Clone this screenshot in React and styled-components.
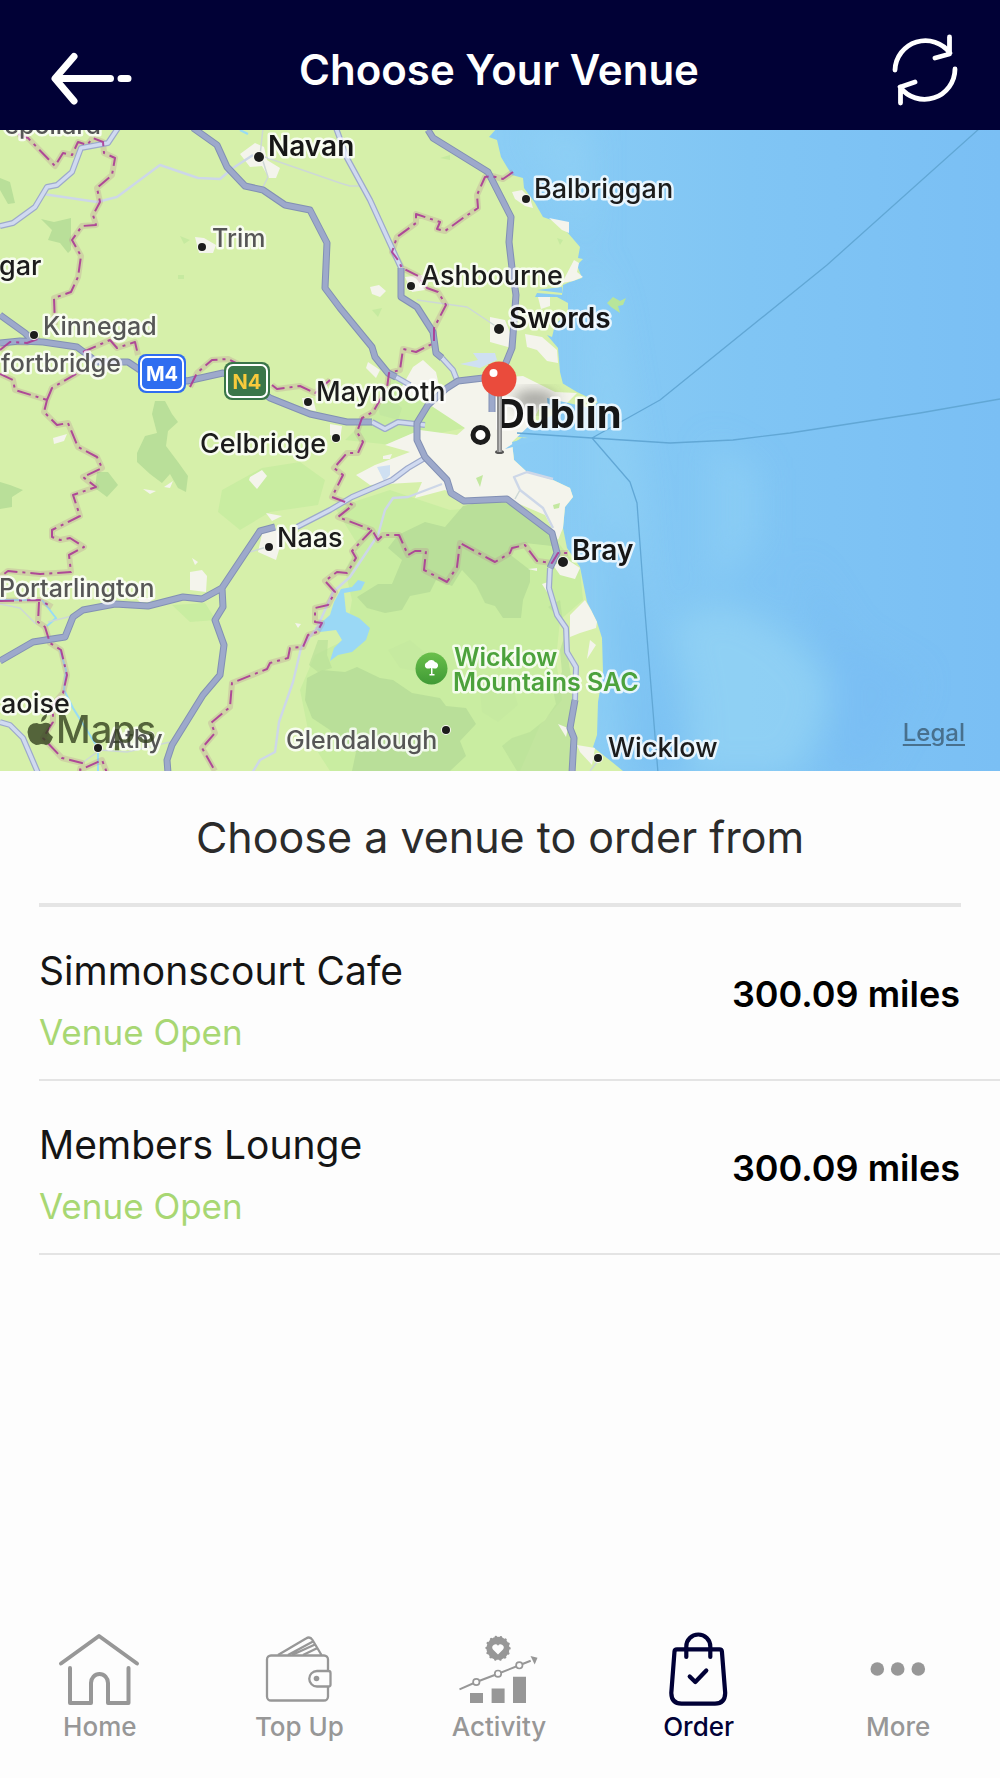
import styled, { createGlobalStyle } from 'styled-components';

const venues = [
    { id: 1, name: 'Simmonscourt Cafe', status: 'Venue Open', distance: '300.09 miles' },
    { id: 2, name: 'Members Lounge', status: 'Venue Open', distance: '300.09 miles' },
];

const motorways = [
    'M193 128L217 145L227 167L245 186L263 190L285 205L310 210L327 243L325 288L340 308L372 347L375 357L388 373L396 377',
    'M401 268V297L417 307L433 332L436 353L442 358',
    'M492 377L458 381L447 388L428 405L417 423V440L425 457L447 480L451 493L464 501L507 499L552 533L557 553L550 568',
    'M428 130L433 138L488 172L511 217L509 242L512 268L516 295L512 348L503 370',
    'M492 385V412',
    'M0 343L20 341L43 342L77 347L97 362H128L143 372L187 381L223 373L250 383L270 398L310 414L347 422L372 422',
    'M0 315L25 333L33 341',
    'M275 527L260 531L242 558L222 588L202 599L183 597L148 606L115 604L83 610L73 617L65 637L33 642L0 661',
    'M222 588L223 607L215 620L224 645L220 675L203 695L172 745L167 760L168 773',
    'M575 700L570 728L574 738L572 773',
];

const mainRoads = [
    'M336 128L347 158L370 200L392 248L401 268',
    'M442 358L453 370L457 380',
    'M396 377L410 385',
    'M118 128L108 143L81 148L72 172L57 185L47 187L35 207L13 223L0 226',
    'M372 422L385 429L398 422L425 425',
    'M425 458L408 468L392 480L352 497L330 510L297 527',
    'M550 568L549 588L557 615L566 628L567 652L576 667L575 700',
    'M0 722L10 725L23 738L38 773',
];

const minorRoads = [
    'M43 194L97 202L117 197L160 165L198 178L220 179L233 168L253 155',
    'M442 484L408 497L393 498L385 510L378 535L350 577L333 592L317 628L301 648L293 682L279 722L275 752L260 760L252 773',
    'M553 528L543 508L520 490L514 477L527 472L553 479',
];

const lanes = [
    'M262 156L340 183L350 186H361M263 128L260 156M268 177L263 187M262 158L268 177',
    'M417 300L467 307L497 327',
    'M170 742L127 752L100 750L82 763M0 604L20 608L36 624M48 622L72 616',
    'M250 552L270 546M515 499L520 490M590 771L597 762',
];

const borders = [
    'M18 134L28 138L55 166L63 153L72 155L78 142L87 145L93 138L103 142L104 153L115 158L112 175L97 188L100 202L93 215L96 225L82 226L72 240L81 256L78 277L71 292L54 298L55 325',
    'M0 350L10 342L27 343L40 338',
    'M83 352L110 340L117 348L135 342L138 355M190 387L197 373L212 360L228 359L240 365M272 385L277 389L300 386L315 393L330 380',
    'M0 374L13 380L15 390L47 400L44 412L57 425L68 423L78 447L97 457L102 468L83 477L96 487L73 495L80 516L52 530V537L60 540L70 538L84 547L69 555L71 572L40 574L8 571L0 577',
    'M47 400L52 388L83 370',
    'M0 601L40 600L52 607M39 602L38 622L45 627L50 643L61 650L67 675L63 693L53 705V722L43 738L62 758L82 763L80 770L102 760L107 773',
    'M513 172L503 179L492 176L485 177L477 195L478 208L463 218L445 231L437 229L440 222L416 214V223L397 237L392 252L398 260L402 268L418 276L427 288L438 292L446 305L434 328V343L416 352L403 349L400 370L389 373L387 388L373 412L362 418L357 432L363 442L358 453L347 453L334 468L343 475L332 497L353 505L338 517L372 530L378 540L383 535H399L408 555L415 551H426L424 570L447 582L457 567L460 543L495 562L510 553L512 548L525 545L537 561L552 563L558 553H568',
    'M372 530L352 551L356 558L347 573L337 572L325 581L335 592L328 605L315 608V622L322 623L317 632L308 635L303 647L290 648L288 658L270 663L267 669L232 683L230 707L211 723L215 733L202 748L215 771',
];

const places = [
    { name: 'Navan', x: 268, y: 156, kind: 'town', dot: [259, 157, 5] },
    { name: 'Balbriggan', x: 534, y: 198, kind: 'village', dot: [526, 199, 4] },
    { name: 'Trim', x: 212, y: 247, kind: 'faded', dot: [202, 247, 4] },
    { name: 'gar', x: -1, y: 275, kind: 'village' },
    { name: 'Ashbourne', x: 421, y: 285, kind: 'village', dot: [411, 286, 4] },
    { name: 'Swords', x: 509, y: 328, kind: 'town', dot: [499, 329, 5] },
    { name: 'Kinnegad', x: 43, y: 335, kind: 'faded', dot: [34, 335, 4] },
    { name: 'fortbridge', x: 1, y: 372, kind: 'faded' },
    { name: 'Maynooth', x: 316, y: 401, kind: 'village', dot: [308, 402, 4] },
    { name: 'Celbridge', x: 200, y: 453, kind: 'village', dot: [336, 438, 4] },
    { name: 'Naas', x: 277, y: 547, kind: 'village', dot: [269, 547, 4] },
    { name: 'Bray', x: 572, y: 560, kind: 'town', dot: [563, 562, 5] },
    { name: 'Portarlington', x: -1, y: 597, kind: 'faded' },
    { name: 'aoise', x: 1, y: 713, kind: 'village' },
    { name: 'Athy', x: 108, y: 748, kind: 'faded', dot: [98, 748, 4] },
    { name: 'Glendalough', x: 286, y: 749, kind: 'faded', dot: [446, 730, 4] },
    { name: 'Wicklow', x: 608, y: 757, kind: 'village', dot: [598, 758, 4] },
];

const BackIcon = () => (
    <svg width="100" height="80" viewBox="36 30 100 80" fill="none" stroke="#fff" strokeWidth="7" strokeLinecap="round" strokeLinejoin="round" aria-hidden="true">
        <path d="M74 56.500L55 78.500L74 101M57 78.500H110.500M121 78.500H128" />
    </svg>
);

const RefreshIcon = () => (
    <svg width="80" height="80" viewBox="884 30 80 80" fill="none" stroke="#fff" strokeWidth="4.800" strokeLinecap="round" strokeLinejoin="round" aria-hidden="true">
        <path d="M897 70A30.500 30.500 0 0 1 952 53M951.500 37V54L937 58" />
        <path d="M957 69A30.500 30.500 0 0 1 902 87M902.500 103V87L917 82" />
    </svg>
);

const HomeIcon = () => (
    <svg width="100" height="80" viewBox="0 0 100 80" fill="none" stroke="currentColor" strokeWidth="4" strokeLinecap="round" strokeLinejoin="round" aria-hidden="true">
        <path d="M11 35.500L49 8L87 35.500" />
        <path d="M20 40V75H41V55A8.500 9 0 0 1 58 55V75H78.500V40" />
    </svg>
);

const WalletIcon = () => (
    <svg width="100" height="80" viewBox="0 0 100 80" fill="none" stroke="currentColor" strokeWidth="2.300" strokeLinejoin="round" aria-hidden="true">
        <path d="M79 43V31.500A4 4 0 0 0 75 27.500H22A4 4 0 0 0 18 31.500V68.500A4 4 0 0 0 22 72.500H75A4 4 0 0 0 79 68.500V58.500" />
        <path d="M68 43H79.500A2 2 0 0 1 81.500 45V56.500A2 2 0 0 1 79.500 58.500H68A7.750 7.750 0 0 1 68 43Z" />
        <path d="M29 27L57 10.500Q61 8 63.500 12L72.500 27M39 27L64 13.500M43 27L66 16.500M54 27L68.500 20" />
        <circle cx="67.500" cy="50.500" r="2.800" fill="currentColor" stroke="none" />
    </svg>
);

const ActivityIcon = () => (
    <svg width="100" height="80" viewBox="0 0 100 80" fill="currentColor" aria-hidden="true">
        <circle cx="49" cy="20.300" r="11.500" />
        <circle cx="49" cy="20.300" r="11.500" fill="none" stroke="currentColor" strokeWidth="2.400" strokeLinecap="round" strokeDasharray=".1 5.061" />
        <path d="M49 26.500L44 21.500A3.100 3.100 0 0 1 49 17.700A3.100 3.100 0 0 1 54 21.500Z" fill="#fdfdfd" />
        <path d="M10.500 61.300L27.300 54L49 45.700L70.300 37.300L81.700 32.700" fill="none" stroke="currentColor" strokeWidth="2" />
        <g fill="#fdfdfd" stroke="currentColor" strokeWidth="1.700">
            <circle cx="27.300" cy="54" r="3.200" />
            <circle cx="49" cy="45.700" r="3.200" />
            <circle cx="70.300" cy="37.300" r="3.200" />
        </g>
        <path d="M81.500 28L88.500 29.700L85.700 36.500Z" />
        <path d="M21 65H34V75H21ZM42.600 60.600H55.600V75H42.600ZM64 48.800H77V75H64Z" />
    </svg>
);

const OrderIcon = () => (
    <svg width="100" height="80" viewBox="0 0 100 80" fill="none" stroke="currentColor" strokeWidth="4.200" strokeLinecap="round" strokeLinejoin="round" aria-hidden="true">
        <path d="M28 21.300H70.500Q72.700 21.300 72.900 23.500L76.200 65Q76 75.700 66 75.700H32.500Q22.500 75.700 22.300 65L25.500 23.500Q25.700 21.300 28 21.300Z" />
        <path d="M37.300 29V18.500A12 12 0 0 1 61.300 18.500V29" />
        <path d="M40.700 48.500L46.300 54L57.300 42.500" />
    </svg>
);

const MoreIcon = () => (
    <svg width="100" height="80" viewBox="0 0 100 80" fill="currentColor" aria-hidden="true">
        <circle cx="29.300" cy="41" r="6.800" />
        <circle cx="49.700" cy="41" r="6.800" />
        <circle cx="70.300" cy="41" r="6.800" />
    </svg>
);

const tabs = [
    { label: 'Home', Icon: HomeIcon },
    { label: 'Top Up', Icon: WalletIcon },
    { label: 'Activity', Icon: ActivityIcon },
    { label: 'Order', Icon: OrderIcon, active: true },
    { label: 'More', Icon: MoreIcon },
];

const VenueMap = () => (
    <MapSvg viewBox="0 130 1000 641" role="img" aria-label="Map of Dublin">
        <defs>
            <linearGradient id="sea" x1="0" x2="1" y1="0" y2="0">
                <stop offset="0.5" stopColor="#8bcdf5" />
                <stop offset="0.75" stopColor="#80c5f4" />
                <stop offset="1" stopColor="#7abff4" />
            </linearGradient>
            <linearGradient id="park" x1="0" x2="0" y1="0" y2="1">
                <stop offset="0" stopColor="#6abf4b" />
                <stop offset="1" stopColor="#3f9a35" />
            </linearGradient>
            <filter id="soft" x="-30%" y="-30%" width="160%" height="160%">
                <feGaussianBlur stdDeviation="7" />
            </filter>
            <filter id="softer" x="-30%" y="-30%" width="160%" height="160%">
                <feGaussianBlur stdDeviation="16" />
            </filter>
        </defs>
        <rect y="130" width="1000" height="641" fill="url(#sea)" />
        <g filter="url(#softer)">
            <path d="M672 632Q700 595 745 612Q810 640 828 690Q820 745 790 775H690Q700 690 672 632Z" fill="#97d6f5" opacity=".65" />
            <path d="M520 130L560 180L610 300L640 480L650 620L640 775H590V130Z" fill="#93d3f6" opacity=".5" />
            <path d="M607 500L650 620L690 775H620L607 640Z" fill="#74bbf1" opacity=".5" />
            <path d="M710 440L760 470L760 540L710 590Z" fill="#94d4f6" opacity=".45" />
            <path d="M800 560L850 640L920 680L870 771H830L840 690Z" fill="#78bdf4" opacity=".6" />
        </g>

        <path
            fill="#d6f0aa"
            d="M0 128H497L489 137L497 140L501 157L507 167L512 175L523 178L524 188L535 203L543 217L557 222L568 233L580 247L578 258L583 259L577 265L582 278L570 282L563 285L562 295L537 293L535 297L557 297L568 303V312L555 325L552 337L547 335L558 348L560 372L563 384L557 380L577 392L598 402L590 408L547 398L540 405L560 412L530 425L500 435L528 438L512 442L514 460L527 472L553 480L570 488L573 497L565 507L563 528L567 548L580 567L583 582L587 602L597 622L602 638L603 672L598 702L597 735L593 747L612 762L623 771V775H0Z"
        />
        <path d="M607 303L613 297L620 301L626 298L623 305L618 306L620 313L611 307Z" fill="#b8e59a" />
        {/* uplands and woods */}
        <path fill="#c9eda1" d="M335 508L390 490L450 510L520 505L560 545L580 570L583 600L560 620L556 660L562 700L540 725L520 771H330L310 740L300 690L315 655L345 640L352 600L345 570L358 545Z" />
        <path fill="#c9eda1" d="M222 490L262 468L300 462L325 480L318 505L270 512L240 530L218 512ZM393 376L420 395L465 428L440 433L392 445L345 440L370 415ZM172 605L205 603L216 620L190 622Z" />
        <path fill="#b9df99" d="M425 522L445 527L463 506L490 500L512 504L540 520L552 535V546L525 543L508 553L530 570V582L523 600L521 618H503L495 606L485 603L476 585L462 570L452 586L436 580L430 592L410 596L402 610L385 613L367 608L357 597L378 584L392 584L402 560L388 548L398 535Z" />
        <path fill="#b9df99" d="M307 678L322 670L345 672L357 667L380 678L393 680L412 693L440 698L446 706L466 708L476 724L460 741L466 756L450 771H352L356 752L340 748L330 730L312 718L305 700Z" />
        <path fill="#b9df99" d="M548 607L560 618L566 632L560 650L562 672L553 690L556 704L545 720L530 732L512 738L502 746L517 771H572L575 700L567 652L560 600ZM318 640L328 640L327 655L332 668L318 672L309 665Z" opacity=".7" />
        <path fill="#b9df99" d="M0 178L10 182L15 203L8 204L0 190ZM41 219L54 222L71 218V250L68 253L60 243L48 240L52 230ZM155 401H165L172 414L178 422L168 431L166 446L178 462L188 476L186 492L178 488L170 474L162 483L150 474L137 462V453L145 436L157 433L152 414ZM0 482L10 485L23 490L12 497V507L0 509ZM97 472H108L118 485L107 497L95 488Z" />
        <path fill="#c6eaa0" d="M388 650L410 640L428 655L420 672L400 668ZM480 690L512 684L518 705L498 722L482 712ZM440 158L450 155V160ZM557 238L563 240L560 245ZM372 310L382 308L378 317ZM180 236L190 240L184 244ZM178 275H184V279H178Z" />
        {/* built-up areas */}
        <g fill="#f4f4ec">
            <path d="M240 154L255 143L264 147L267 160L280 168L276 178H269L262 166L250 167ZM195 237L204 238L216 245L213 253L199 253ZM302 398H313L316 411L304 409Z" />
            <path d="M512 192L522 190L530 198L533 208L525 206L515 199ZM549 218L569 222V233L562 230ZM574 260L579 263L577 272L583 277L573 281L562 283ZM370 287L379 285L386 291L380 297L372 294ZM405 277L422 275L425 290L412 292Z" />
            <path d="M490 317L505 320L515 345L508 347L490 342ZM525 334L542 337L557 350L558 363L547 361L537 350L527 347ZM538 297H550V306L541 309ZM368 362L380 370L376 378L366 368Z" />
            <path d="M413 367L423 360L436 372L440 390L455 384L490 378L523 376L555 392L577 393L565 405L540 407L530 425L512 442L514 460L527 472L553 480L570 488L573 497L565 507L563 528L558 540L545 515L510 500L465 502L445 490L415 498L422 482L370 485L356 475L375 465L410 452L385 445L420 430L457 435L465 428L430 405L400 390Z" />
            <path d="M383 456L392 454L390 459H383ZM553 565L568 560L580 568L575 579L560 575ZM542 584L548 582L547 592ZM585 600L591 610L597 622L596 628L580 633L570 637V615ZM590 640L596 645L587 659ZM558 724L568 728L566 737ZM577 745L595 748L592 765L580 752ZM528 569L537 568V571Z" />
            <path d="M250 477L262 470L267 476L257 489L249 480ZM190 572L202 570L207 576L206 592L190 590ZM192 558L198 562L195 565ZM266 513L282 516L272 521ZM262 534L275 527L282 540L276 560L258 552ZM53 438L67 434L64 441L54 444ZM330 424L342 426L340 440L330 435ZM143 489L156 491L150 494ZM164 487L173 481L170 488ZM136 598H154L150 602H140ZM295 623L301 624L298 628Z" />
        </g>
        <path d="M473 353L495 353L497 360L480 368L460 364L478 360ZM377 467L390 465V475L384 481Z" fill="#cfe0f2" />
        <path d="M547 398L568 403L548 408ZM537 290L562 287V293ZM505 449L530 432L522 438L545 439L528 443Z" fill="#8bcdf5" />
        <path d="M476 478L483 475L480 487ZM553 505L560 503L559 508L554 509ZM378 407L392 399L402 408L398 420L380 415Z" fill="#c3e8a0" />
        <path d="M341 589L352 587L358 580L365 582L361 590L344 593L346 612L359 618L370 628L366 640L352 652L338 655L330 661L334 648L342 640L336 630L320 632L315 628L330 615L334 602Z" fill="#9ad8f5" />
        <path d="M42 600L56 618L47 626M60 650L66 670L64 690L73 708L98 748V773M0 600H40M240 130L248 134" fill="none" stroke="#98dcf5" strokeWidth="2" />

        <g fill="none" strokeLinejoin="round" strokeLinecap="butt">
            <path d={lanes.join('')} stroke="#cdd8d6" strokeWidth="1.500" />
            <path d={minorRoads.join('')} stroke="#cdd7e8" strokeWidth="2.400" />
            <path d={borders.join('')} stroke="#b98a96" strokeOpacity=".28" strokeWidth="6" />
            <path d={mainRoads.join('')} stroke="#9da9cb" strokeWidth="6" />
            <path d={mainRoads.join('')} stroke="#d0daf0" strokeWidth="3.600" />
            <path d={motorways.join('')} stroke="#8290b4" strokeWidth="7" />
            <path d={motorways.join('')} stroke="#9da9cb" strokeWidth="5" />
            <path d={borders.join('')} stroke="#ab3a95" strokeOpacity=".9" strokeWidth="2" strokeDasharray="14 5 3 5" />
            <path d="M517 433L592 438L670 443L733 440L790 433L920 413L1000 399M592 438L660 400L827 265L980 128M592 438L630 482L637 503L645 612L658 773" stroke="#61a7d5" strokeWidth="1.300" />
        </g>

        <rect x="138" y="354" width="48" height="39" rx="8" fill="#2f6df0" />
        <rect x="141" y="357" width="42" height="33" rx="6" fill="none" stroke="#fff" strokeWidth="2" />
        <Shield x="162" y="381" fill="#fff">M4</Shield>
        <rect x="224" y="362" width="46" height="38" rx="8" fill="#3b7649" />
        <rect x="227" y="365" width="40" height="32" rx="6" fill="none" stroke="#fff" strokeWidth="2" />
        <Shield x="247" y="389" fill="#f8ca3c">N4</Shield>

        <PlaceName x="101" y="134" textAnchor="end" $kind="faded">epollard</PlaceName>
        {places.map(({ name, x, y, kind, dot }) => (
            <g key={name}>
                {dot && <circle cx={dot[0]} cy={dot[1]} r={dot[2]} fill="#1c1c1c" stroke="#f8f8f0" strokeWidth="2" paintOrder="stroke" />}
                <PlaceName x={x} y={y} $kind={kind}>{name}</PlaceName>
            </g>
        ))}

        <circle cx="431.500" cy="668.500" r="16" fill="url(#park)" />
        <path d="M431 660a4 4 0 0 1 4 2a3.500 3.500 0 0 1 2 6q-2 1-4.500 0v6h2v1.500h-5V674h1.500v-6q-3 1-5 0a3.500 3.500 0 0 1 1.500-6a4 4 0 0 1 3.500-2z" fill="#fff" />
        <PlaceName x="454" y="666" $kind="park">Wicklow</PlaceName>
        <PlaceName x="453" y="691" $kind="park">Mountains SAC</PlaceName>

        <ellipse cx="535" cy="400" rx="22" ry="10" fill="#333" opacity=".4" filter="url(#soft)" />
        <PlaceName x="496" y="428" $kind="city">Dublin</PlaceName>
        <circle cx="480.500" cy="435" r="7.500" fill="#fff" stroke="#1c1c1c" strokeWidth="5" />
        <ellipse cx="499.500" cy="452" rx="4.500" ry="2" fill="#555" />
        <rect x="497" y="392" width="5" height="60" fill="#8d8d8d" />
        <rect x="499" y="392" width="1.500" height="60" fill="#bcbcbc" />
        <circle cx="499" cy="379" r="17.500" fill="#ea4b3c" />
        <circle cx="493.500" cy="373" r="4" fill="#fff" />

        {/* map provider */}
        <g fill="#34421f" opacity=".8">
            <path d="M41 722q0-6 6-8q0 6-6 8zM51 725q-3-3-7-2q-4 2-7 0q-9 0-9.500 9q1 11 8.500 13q3 0 5-1q3 0 5 1q4 0 7-8q-8-5-2-12z" />
            <MapsMark x="56" y="743">Maps</MapsMark>
        </g>
    </MapSvg>
);

const App = () => {
    return (
        <Page>
            <GlobalStyle />
            <Header>
                <IconButton aria-label="Back">
                    <BackIcon />
                </IconButton>
                <HeaderTitle>Choose Your Venue</HeaderTitle>
                <IconButton aria-label="Refresh">
                    <RefreshIcon />
                </IconButton>
            </Header>
            <MapArea>
                <VenueMap />
                <LegalLink href="#legal">Legal</LegalLink>
            </MapArea>
            <main>
                <ListTitle>Choose a venue to order from</ListTitle>
                <VenueList>
                    {venues.map((venue) => (
                        <VenueRow key={venue.id}>
                            <VenueInfo>
                                <VenueName>{venue.name}</VenueName>
                                <VenueStatus>{venue.status}</VenueStatus>
                            </VenueInfo>
                            <Distance>{venue.distance}</Distance>
                        </VenueRow>
                    ))}
                </VenueList>
            </main>
            <TabBar>
                {tabs.map(({ label, Icon, active }) => (
                    <Tab key={label} href={`#${label}`} $active={active} aria-current={active ? 'page' : undefined}>
                        <Icon />
                        {label}
                    </Tab>
                ))}
            </TabBar>
        </Page>
    );
};

const GlobalStyle = createGlobalStyle`
    * {
        box-sizing: border-box;
    }

    body {
        margin: 0;
        background: #fdfdfd;
        font-family: Inter, "Liberation Sans", sans-serif;
    }
`;

const Page = styled.div`
    display: flex;
    flex-direction: column;
    min-height: 100vh;
`;

const Header = styled.header`
    display: grid;
    grid-template-columns: 1fr auto 1fr;
    align-items: center;
    padding: 30px 38px 20px 36px;
    background: #010136;
`;

const IconButton = styled.button`
    display: flex;
    justify-self: start;
    padding: 0;
    border: none;
    background: none;
    cursor: pointer;

    &:last-child {
        justify-self: end;
    }
`;

const HeaderTitle = styled.h1`
    margin: 0;
    color: #fff;
    font-size: 42px;
    font-weight: 600;
    line-height: 78px;
`;

const MapArea = styled.div`
    position: relative;
`;

const MapSvg = styled.svg`
    display: block;
    width: 100%;
    height: auto;
`;

const kinds = {
    town: { size: 28, weight: 600, color: '#161616' },
    village: { size: 27, weight: 500, color: '#1c1c1c' },
    faded: { size: 25, weight: 500, color: '#565656' },
    park: { size: 25, weight: 600, color: '#4ca23c' },
    city: { size: 40, weight: 700, color: '#161616' },
};

const PlaceName = styled.text`
    fill: ${({ $kind }) => kinds[$kind].color};
    font-size: ${({ $kind }) => kinds[$kind].size}px;
    font-weight: ${({ $kind }) => kinds[$kind].weight};
    stroke: rgba(255, 255, 255, 0.8);
    stroke-width: 5px;
    stroke-linejoin: round;
    paint-order: stroke;
`;

const Shield = styled.text`
    font-size: 20px;
    font-weight: 700;
    text-anchor: middle;
`;

const MapsMark = styled.text`
    font-size: 38px;
    font-weight: 500;
`;

const LegalLink = styled.a`
    position: absolute;
    right: 35px;
    bottom: 22px;
    color: #48708d;
    font-size: 24px;
    font-weight: 500;
    line-height: 32px;
    text-decoration-thickness: 2px;
    text-underline-offset: 3px;
`;

const ListTitle = styled.h2`
    margin: 0 39px;
    padding: 38px 0;
    border-bottom: 4px solid #e5e5e5;
    color: #2b2b2b;
    font-size: 43px;
    font-weight: 400;
    line-height: 56px;
    text-align: center;
`;

const VenueList = styled.ul`
    margin: 0;
    padding: 0 0 0 39px;
    list-style: none;
`;

const VenueRow = styled.li`
    display: flex;
    align-items: center;
    justify-content: space-between;
    padding: 2px 40px 0 0;
    border-bottom: 2px solid #e4e4e4;
`;

const VenueInfo = styled.div`
    display: flex;
    flex-direction: column;
    gap: 15px;
    padding: 38px 0 25px;
`;

const VenueName = styled.span`
    color: #151515;
    font-size: 39px;
    line-height: 48px;
`;

const VenueStatus = styled.span`
    color: #a8d773;
    font-size: 35px;
    line-height: 44px;
`;

const Distance = styled.span`
    color: #000;
    font-size: 36px;
    font-weight: 600;
    line-height: 44px;
`;

const TabBar = styled.nav`
    display: grid;
    grid-template-columns: repeat(5, 1fr);
    margin-top: auto;
    padding: 0 2px 35px 0;
`;

const Tab = styled.a`
    display: flex;
    flex-direction: column;
    align-items: center;
    gap: 3px;
    color: ${({ $active }) => ($active ? '#010136' : '#979797')};
    font-size: 26px;
    font-weight: 500;
    line-height: 32px;
    text-decoration: none;
`;

export default App;
